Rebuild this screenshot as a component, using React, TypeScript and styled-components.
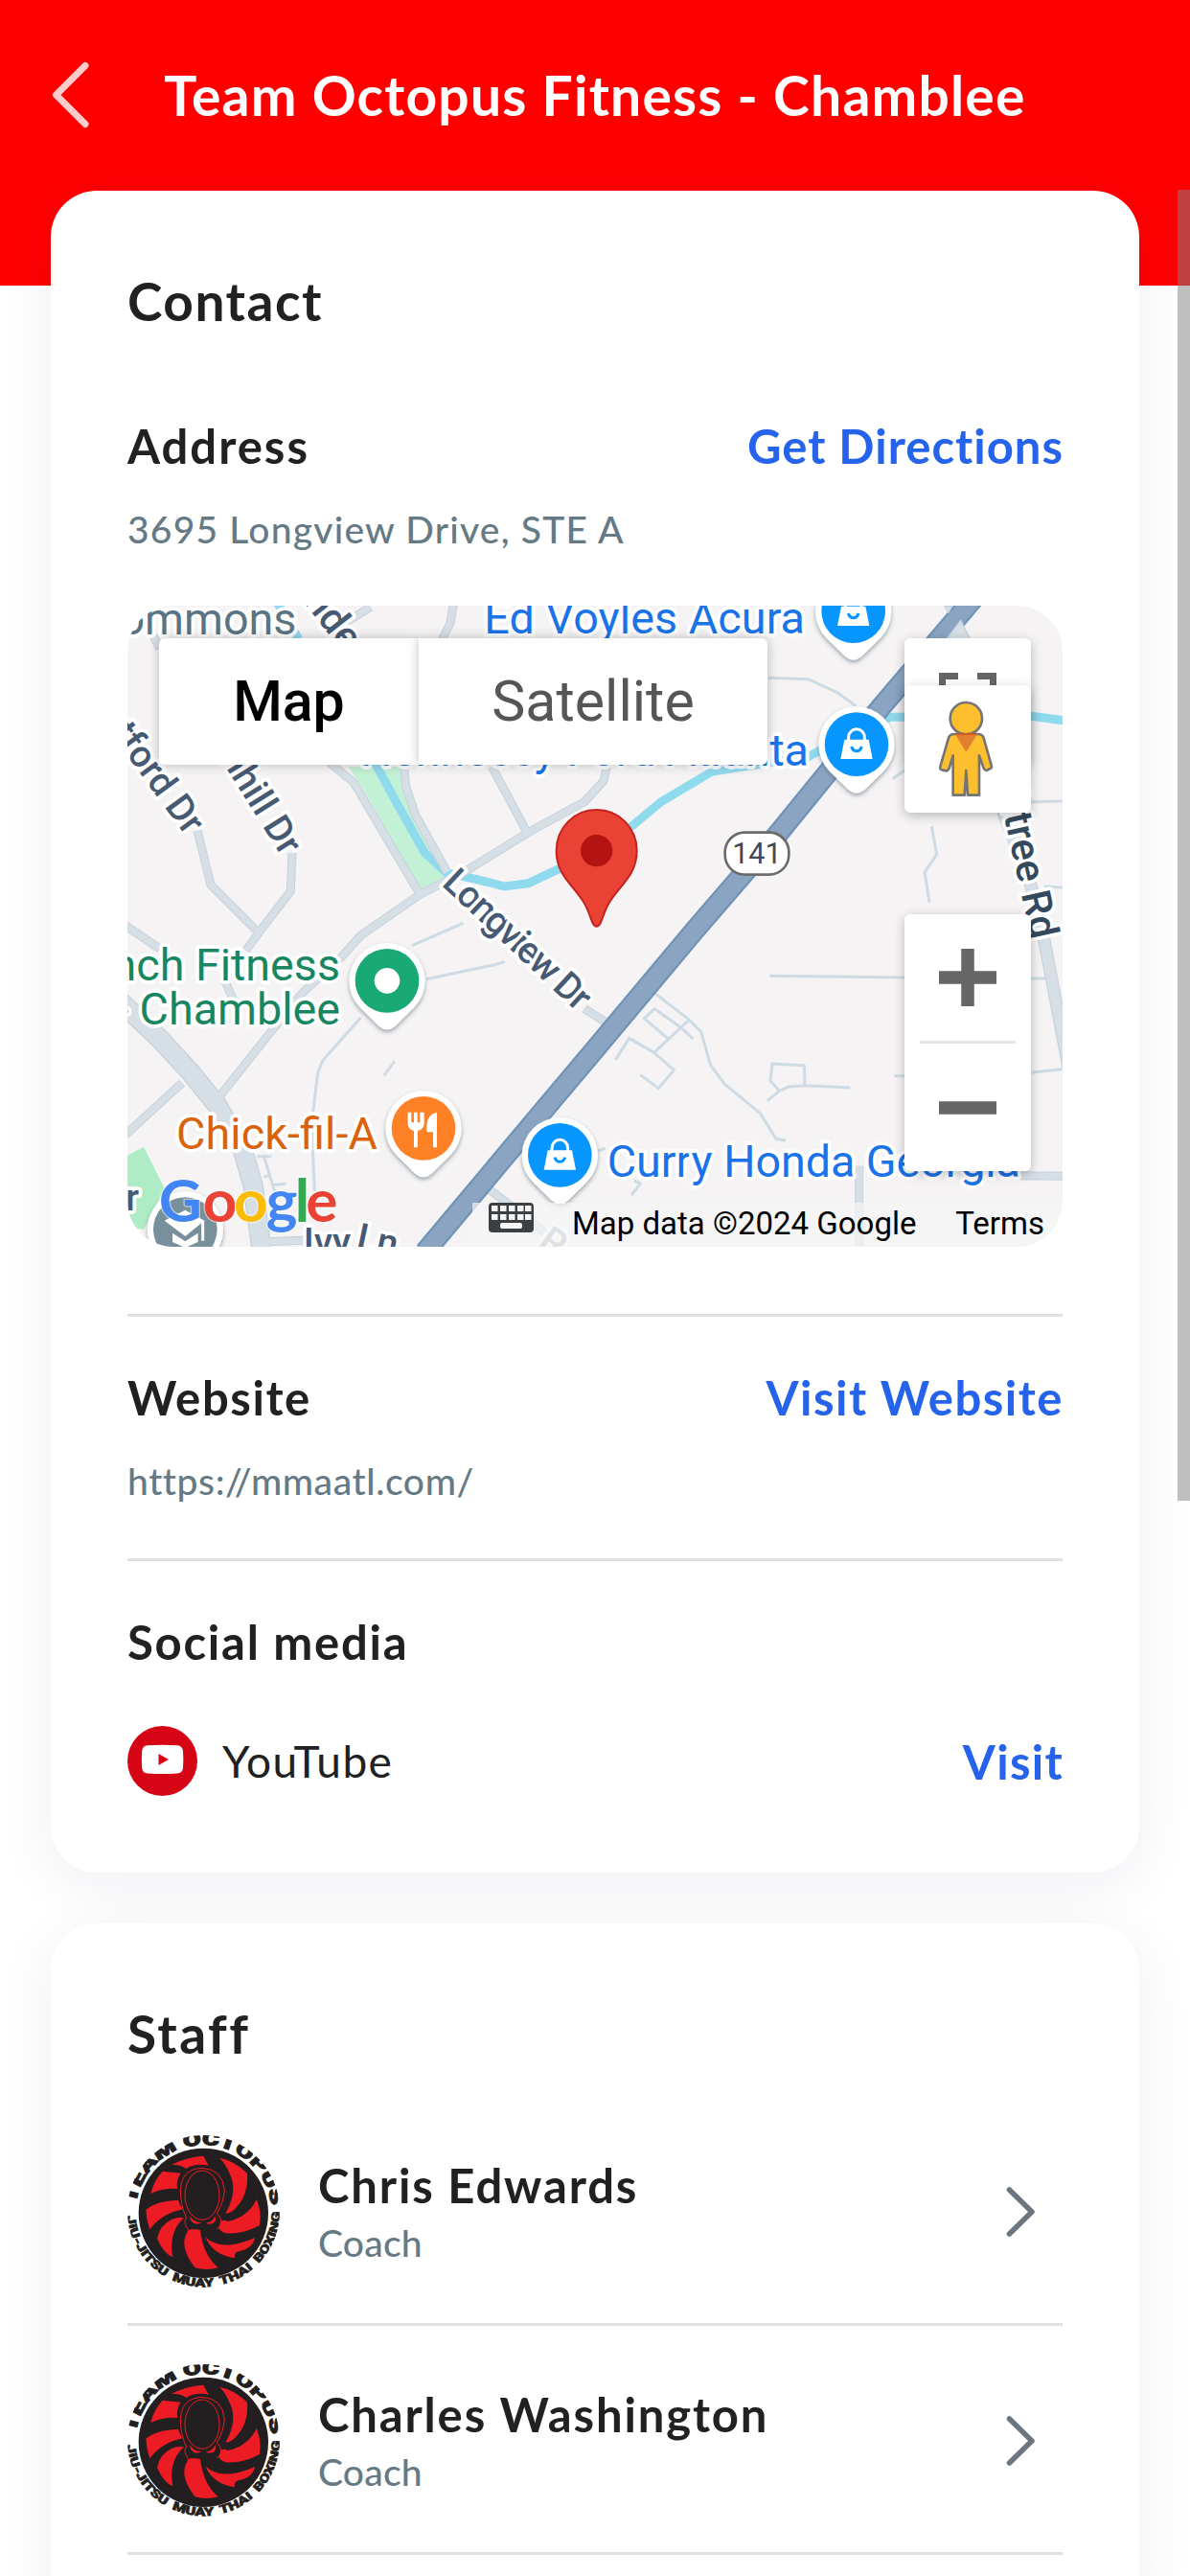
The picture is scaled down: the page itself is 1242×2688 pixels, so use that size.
import styled, { createGlobalStyle, css } from "styled-components";

interface TextProps {
  $spacing?: number;
}

interface Staff {
  id: number;
  name: string;
  role: string;
}

const staff: Staff[] = [
  { id: 1, name: "Chris Edwards", role: "Coach" },
  { id: 2, name: "Charles Washington", role: "Coach" },
];

const GlobalStyle = createGlobalStyle`
  * {
    box-sizing: border-box;
  }
  body {
    margin: 0;
    background: #ffffff;
    font-family: Lato, "Open Sans", sans-serif;
  }
`;

const spacing = css<TextProps>`
  letter-spacing: ${(props) => props.$spacing ?? 0}px;
  white-space: nowrap;
`;

const Page = styled.div`
  position: relative;
  width: 1242px;
  height: 2688px;
  overflow: hidden;
  background: #ffffff;
`;

const Header = styled.header`
  display: grid;
  grid-template-columns: 133px 1fr 133px;
  align-items: center;
  height: 298px;
  padding-bottom: 100px;
  margin-bottom: -99px;
  background: #ff0000;
`;

const BackButton = styled.button`
  display: flex;
  padding: 0 0 0 53px;
  border: none;
  background: none;
`;

const Title = styled.h1<TextProps>`
  margin: 0;
  color: #ffffff;
  font-size: 57px;
  font-weight: 700;
  line-height: 66px;
  text-align: center;
  ${spacing}
`;

const Card = styled.section`
  position: relative;
  margin: 0 53px 53px;
  padding: 82px 80px 80px;
  border-radius: 48px;
  background: #ffffff;
  box-shadow: 0 12px 60px rgba(30, 34, 80, 0.07);
`;

const CardTitle = styled.h2<TextProps>`
  margin: 0;
  color: #212121;
  font-size: 55px;
  font-weight: 700;
  line-height: 66px;
  ${spacing}
`;

const Row = styled.div<{ $top: number }>`
  display: flex;
  justify-content: space-between;
  align-items: center;
  margin-top: ${(props) => props.$top}px;
`;

const Label = styled.h3<TextProps>`
  margin: 0;
  color: #212121;
  font-size: 49px;
  font-weight: 700;
  line-height: 60px;
  ${spacing}
`;

const Link = styled.a<TextProps>`
  margin-right: -1px;
  color: #2563eb;
  font-size: 49px;
  font-weight: 700;
  line-height: 60px;
  ${spacing}
`;

const Detail = styled.p<TextProps & { $top: number }>`
  margin: ${(props) => props.$top}px 0 0;
  color: #667a85;
  font-size: 39px;
  font-weight: 500;
  line-height: 48px;
  ${spacing}
`;

const Divider = styled.hr<{ $top?: number }>`
  height: 3px;
  margin: ${(props) => props.$top ?? 0}px 0 0;
  border: none;
  background: #e0e0e0;
`;

const MapBox = styled.div`
  position: relative;
  height: 669px;
  margin: 56px 0 70px;
  border-radius: 48px;
  overflow: hidden;
  background: #f5f3f3;
  font-family: Roboto, sans-serif;
`;

const MapSvg = styled.svg`
  display: block;
  width: 976px;
  height: 669px;
`;

const MapTypes = styled.div`
  position: absolute;
  top: 34px;
  left: 33px;
  display: flex;
  height: 132px;
`;

const MapType = styled.button<{ $active?: boolean }>`
  width: ${(props) => (props.$active ? 271 : 364)}px;
  padding: 0 0 2px;
  border: none;
  border-radius: ${(props) => (props.$active ? "6px 0 0 6px" : "0 6px 6px 0")};
  background: #ffffff;
  box-shadow: 0 0 12px rgba(0, 0, 0, 0.25);
  color: ${(props) => (props.$active ? "#000000" : "#565656")};
  font-family: inherit;
  font-size: 59px;
  font-weight: ${(props) => (props.$active ? 500 : 400)};
`;

const MapButton = styled.button<{ $top: number; $height: number }>`
  position: absolute;
  top: ${(props) => props.$top}px;
  right: 33px;
  display: flex;
  width: 132px;
  height: ${(props) => props.$height}px;
  padding: 0;
  border: none;
  border-radius: 6px;
  background: #ffffff;
  box-shadow: 0 3px 12px rgba(0, 0, 0, 0.25);
`;

const MapFooter = styled.div`
  position: absolute;
  right: 0;
  bottom: 0;
  display: flex;
  align-items: flex-start;
  width: 616px;
  height: 46px;
  padding: 0 19px 0 17px;
  background: rgba(245, 245, 245, 0.7);
  color: #000000;
  font-size: 33px;
  line-height: 44px;
  white-space: nowrap;
`;

const Copyright = styled.span`
  margin: 0 auto 0 40px;
`;

const SocialRow = styled(Row)`
  height: 73px;
`;

const SocialName = styled.span<TextProps>`
  flex: 1;
  margin-left: 26px;
  color: #212121;
  font-size: 46px;
  line-height: 60px;
  ${spacing}
`;

const StaffList = styled.div`
  margin-top: 33px;
`;

const StaffRow = styled.div`
  display: flex;
  align-items: center;
  gap: 40px;
  padding: 40px 28px 37px 0;
`;

const StaffText = styled.div`
  flex: 1;
  padding-bottom: 2px;
`;

const ScrollThumb = styled.div`
  position: absolute;
  top: 198px;
  right: 0;
  width: 13px;
  height: 1368px;
  background: rgba(127, 127, 127, 0.5);
`;

const localRoads = [
  "M228 740 L270 910 L420 1060 L520 930 L525 810",
  "M420 1060 L380 1115",
  "M640 525 L718 590 L925 940",
  "M875 530 L880 600 L910 690 L1010 870",
  "M1510 540 L1500 585 L1440 650 L1265 745 L1080 860 L925 940 L740 1068 L680 1135 L560 1245 L450 1380 L295 1575",
  "M1150 540 L1260 745",
  "M1030 30 L1020 90 L990 150",
  "M690 90 L770 40",
  "M90 130 L110 170",
  "M0 1035 L110 1110",
  "M180 1530 L0 1695",
  "M310 1200 L340 1270",
  "M430 2028 L570 2022",
  "M1140 1862 L1210 1915 L1330 2010",
  "M1440 1298 L1515 1345",
  "M2300 1790 V2050",
  "M2805 1820 L2945 1822",
];

const lanes = [
  "M2015 262 L2140 266 L2230 307 L2290 350",
  "M2527 727 L2543 815 L2505 870 L2520 965",
  "M2405 578 L2445 550",
  "M2835 650 L2940 648",
  "M2880 915 L2940 918",
  "M2830 1203 L2890 1203",
  "M900 1100 L1060 1030",
  "M945 1205 L1160 1160 L1190 1150",
  "M740 1325 L620 1460 L605 1500 L590 1620 L590 1760 L595 1870",
  "M812 1507 L845 1463",
  "M435 1755 L470 1870 M415 1760 H460 M460 1850 L505 1846 M435 1825 L455 1818",
  "M2020 1195 L2442 1200",
  "M1655 1245 L1765 1330 L1805 1370 L1835 1475 L1880 1535 L1990 1625 L2040 1705 L2070 1710",
  "M1765 1335 L1658 1435 M1700 1390 L1627 1328 L1660 1298 L1740 1355 L1780 1392",
  "M1537 1458 L1580 1390 L1658 1435 L1720 1490 L1672 1547 L1615 1505",
  "M2013 1586 L2050 1555 L2022 1523 L2028 1470 L2128 1475 L2130 1538 L2272 1545 M2050 1555 L2080 1542 L2130 1538",
  "M2410 1508 H2445 M2840 1498 L2940 1486",
  "M1595 1835 L1615 1845 L1587 1882 M1460 1750 L1505 1735",
];

interface PinProps {
  x: number;
  y: number;
  color: string;
  kind: "bag" | "dot" | "food" | "school";
}

const Pin = ({ x, y, color, kind }: PinProps) => (
  <g transform={`translate(${x} ${y})`}>
    <g filter="url(#pinShadow)">
      <path d="M-85 84 A119 119 0 1 1 85 84 L26 142 Q0 164 -26 142 Z" fill="#fff" />
    </g>
    <circle r="100" fill={color} />
    {kind === "bag" && (
      <>
        <path d="M-25 -8 V-22 A25 26 0 0 1 25 -22 V-8" fill="none" stroke="#fff" strokeWidth="9" />
        <path d="M-38 -15 H38 L50 46 H-50 Z" fill="#fff" />
        <path d="M-16 7 Q-12 21 0 21 Q12 21 16 7" fill="none" stroke={color} strokeWidth="9" />
      </>
    )}
    {kind === "dot" && <circle r="40" fill="#fff" />}
    {kind === "food" && (
      <>
        <path
          d="M-49 -50 H-38 V-18 H-30 V-50 H-19 V-18 H-11 V-50 H2 V-15 Q2 4 -18 8 V60 H-30 V8 Q-49 4 -49 -15 Z"
          fill="#fff"
        />
        <path d="M42 -50 V60 H30 V12 H10 V-8 Q12 -45 42 -50 Z" fill="#fff" />
      </>
    )}
    {kind === "school" && (
      <>
        <path d="M-65 -27 L0 -60 L60 -27 L0 22 Z" fill="#fff" />
        <path d="M-40 12 L0 38 L40 12 V40 L0 58 L-40 40 Z" fill="#fff" />
        <path d="M55 -27 V36" stroke="#fff" strokeWidth="9" />
      </>
    )}
  </g>
);

const MapDrawing = () => (
  <MapSvg viewBox="9 36 2928 2007">
    <defs>
      <filter id="pinShadow" x="-30%" y="-30%" width="160%" height="160%">
        <feDropShadow dx="0" dy="7" stdDeviation="6" floodColor="#4a6070" floodOpacity="0.55" />
      </filter>
    </defs>

    <path d="M700 540 H865 L880 610 L1005 885 L930 930 L745 605 Z" fill="#c3f1d5" />
    <path d="M0 1762 L60 1730 L125 1860 L60 1990 L0 1975 Z" fill="#aeecc6" />
    <path
      d="M480 30 L545 140 M780 520 L850 650 L940 810 L1010 873 L1100 892 L1190 915 L1265 905 L1360 860 L1590 725 L1680 650 L1840 555 L2140 510 L2300 420 L2400 385 L2840 382 L2945 396"
      fill="none"
      stroke="#90daee"
      strokeWidth="27"
    />

    <g fill="none" strokeLinejoin="round">
      {lanes.map((d) => (
        <path key={d} d={d} stroke="#cfdbe4" strokeWidth="9" />
      ))}
      <g stroke="#c6d1da">
        {localRoads.map((d) => (
          <path key={d} d={d} strokeWidth="27" />
        ))}
        <path d="M-60 1230 L110 1392 L205 1495 L290 1600 L370 1740 L402 1850 L430 2060" strokeWidth="64" />
        <path d="M2750 680 L2835 900 L2880 1085 L2955 1480" strokeWidth="40" />
      </g>
      <g stroke="#d7dfe6">
        {localRoads.map((d) => (
          <path key={d} d={d} strokeWidth="21" />
        ))}
        <path d="M-60 1230 L110 1392 L205 1495 L290 1600 L370 1740 L402 1850 L430 2060" strokeWidth="56" />
        <path d="M2750 680 L2835 900 L2880 1085 L2955 1480" strokeWidth="33" />
      </g>
      <path d="M2690 -24 L2370 352 L2050 745 L1787 1050 L1477 1420 L1300 1630 L940 2060" stroke="#6f92b7" strokeWidth="67" />
      <path d="M2690 -24 L2370 352 L2050 745 L1787 1050 L1477 1420 L1300 1630 L940 2060" stroke="#8ba4c1" strokeWidth="54" />
      <path d="M2570 145 L2618 82 L2650 145 Z M2568 38 H2590 L2580 58 Z" fill="#d7dfe6" stroke="#c6d1da" strokeWidth="4" />
    </g>

    <g fontFamily="Roboto, sans-serif" stroke="#fff" strokeWidth="22" strokeLinejoin="round" paintOrder="stroke">
      <g fontSize="117" fontWeight="500" fill="#475a73">
        <text textAnchor="end" transform="translate(192 759) rotate(54)">Hartford Dr</text>
        <text textAnchor="end" transform="translate(493 824) rotate(58)">Thornhill Dr</text>
        <text transform="translate(990 910) rotate(43)" textLength="585">Longview Dr</text>
        <text transform="translate(558 22) rotate(52)" fontSize="125">nder</text>
        <text x="560" y="2067">Ivy</text>
        <text transform="translate(722 2048) rotate(12)">Ln</text>
        <text x="45" y="1930" textAnchor="end">Dr</text>
        <text transform="translate(1290 2040) rotate(35)" fill="#a9b4bf">R</text>
        <text textAnchor="end" transform="translate(2840 1084) rotate(77.5)" fontSize="126" fill="#34495c">
          Peachtree Rd
        </text>
      </g>
      <g fontSize="140" fill="#1a73e8">
        <text x="1126" y="122" textLength="1004">Ed Voyles Acura</text>
        <text x="738" y="537" textLength="1404">Hennessy Ford Atlanta</text>
        <text x="1511" y="1825" textLength="1294">Curry Honda Georgia</text>
        <text x="538" y="125" textAnchor="end" fill="#5a7483">Commons</text>
        <text x="675" y="1208" textAnchor="end" fill="#188660">Crunch Fitness</text>
        <text x="675" y="1348" textAnchor="end" fill="#188660">- Chamblee</text>
        <text x="162" y="1738" textLength="630" fill="#d9620a">Chick-fil-A</text>
      </g>
    </g>

    <rect x="1880" y="746" width="200" height="132" rx="62" fill="#fff" stroke="#6b6b6b" strokeWidth="8" />
    <text x="1980" y="844" textAnchor="middle" fontFamily="Roboto, sans-serif" fontSize="92" fill="#3f4a55">141</text>

    <Pin x={2282} y={53} color="#0795ff" kind="bag" />
    <Pin x={2292} y={470} color="#0795ff" kind="bag" />
    <Pin x={1363} y={1756} color="#0795ff" kind="bag" />
    <Pin x={822} y={1210} color="#19a974" kind="dot" />
    <Pin x={936} y={1672} color="#ff8126" kind="food" />
    <Pin x={190} y={1988} color="#78909c" kind="school" />

    <path
      d="M1478 675 C1408 675 1352 731 1352 803 C1352 880 1405 910 1440 968 C1460 1002 1462 1040 1478 1040 C1494 1040 1496 1002 1516 968 C1551 910 1604 880 1604 803 C1604 731 1548 675 1478 675 Z"
      fill="#ea4335"
      stroke="#c5221f"
      strokeWidth="6"
    />
    <circle cx="1478" cy="803" r="50" fill="#b31412" />

    <text
      y="1966"
      fontFamily="Lato, sans-serif"
      fontSize="186"
      fontWeight="700"
      stroke="#fff"
      strokeOpacity="0.5"
      strokeWidth="8"
      paintOrder="stroke"
    >
      <tspan x="107" fill="#4285f4">G</tspan>
      <tspan x="245" fill="#ea4335">o</tspan>
      <tspan x="342" fill="#fbbc05">o</tspan>
      <tspan x="443" fill="#4285f4">g</tspan>
      <tspan x="533" fill="#34a853">l</tspan>
      <tspan x="568" fill="#ea4335">e</tspan>
    </text>
  </MapSvg>
);

const KeyboardIcon = () => (
  <svg width="47" height="31" viewBox="0 0 47 31">
    <rect width="47" height="31" rx="4" fill="#3c4043" />
    <g fill="#f5f5f5">
      {[3, 12, 21, 30, 38].map((x) => (
        <g key={x}>
          <rect x={x} y="3" width="6.5" height="6" />
          <rect x={x} y="12" width="6.5" height="6" />
        </g>
      ))}
      <rect x="12" y="21" width="23" height="6" rx="2" />
    </g>
  </svg>
);

const FullscreenIcon = () => (
  <svg width="132" height="132" viewBox="0 0 132 132">
    <path d="M39.5 60 V39.5 H56 M76 39.5 H92.5 V60" fill="none" stroke="#666666" strokeWidth="7" />
  </svg>
);

const Pegman = () => (
  <svg width="132" height="133" viewBox="1002 285 396 399">
    <g fill="#fdbf2d" stroke="#757575" strokeWidth="8" strokeLinejoin="round">
      <path d="M1158 438 Q1144 438 1140 450 L1114 540 Q1112 549 1122 551 L1133 553 Q1138 553 1142 545 L1154 505 V629 H1190 L1195 552 L1200 629 H1236 V505 L1250 545 Q1253 553 1260 551 L1269 547 Q1277 544 1274 536 L1250 450 Q1246 438 1232 438 Z" />
      <circle cx="1195" cy="389" r="50" />
    </g>
    <path d="M1160 437 H1231 L1195 494 Z" fill="#e08030" />
    <path d="M1162 438 H1229" stroke="#d15a20" strokeWidth="6" />
  </svg>
);

const ZoomIcons = () => (
  <svg width="132" height="268" viewBox="0 0 132 268">
    <path d="M36 66 H96 M66 36 V96 M36 202 H96" stroke="#666666" strokeWidth="13.5" />
    <path d="M16 133.5 H116" stroke="#e6e6e6" strokeWidth="3" />
  </svg>
);

const YouTubeIcon = () => (
  <svg width="73" height="73" viewBox="0 0 73 73">
    <circle cx="36.5" cy="36.5" r="36.5" fill="#d60515" />
    <path
      d="M21 20.3 Q37 19 52 20.3 Q57.5 21 58 26 Q58.7 35 58 44 Q57.5 49 52 49.5 Q37 50.5 21 49.5 Q15.7 49 15.2 44 Q14.5 35 15.2 26 Q15.7 21 21 20.3 Z"
      fill="#fff"
    />
    <path d="M32.5 29 L43 35 L32.5 41 Z" fill="#d60515" />
  </svg>
);

const TeamLogo = ({ id }: { id: number }) => (
  <svg width="159" height="159" viewBox="38 55 477 477">
    <defs>
      <clipPath id={`crop${id}`}>
        <circle cx="276.5" cy="293.5" r="238.5" />
      </clipPath>
      <path id={`top${id}`} d="M65 270 A213 213 0 0 1 489 292" />
      <path id={`bottom${id}`} d="M37 308 A240 240 0 0 0 516 302" />
    </defs>
    <g clipPath={`url(#crop${id})`}>
      <g fontFamily="Roboto, sans-serif" fontWeight="900" fill="#231f20" stroke="#231f20">
        <text fontSize="56" strokeWidth="3">
          <textPath href={`#top${id}`} textLength="618" lengthAdjust="spacingAndGlyphs">
            TEAM OCTOPUS
          </textPath>
        </text>
        <text fontSize="37" strokeWidth="2" wordSpacing="8">
          <textPath href={`#bottom${id}`} textLength="730" lengthAdjust="spacingAndGlyphs">
            JIU-JITSU MUAY THAI BOXING
          </textPath>
        </text>
      </g>
      <circle cx="276" cy="299" r="203" fill="#231f20" />
      <g fill="#ed1c24">
        <path d="M176 148 Q220 124 276 120 L292 150 Q250 142 222 160 Q205 146 176 148 Z" />
        <path d="M326 126 Q375 136 413 175 Q418 240 378 282 Q365 298 345 300 Q385 230 358 176 Q348 148 326 126 Z" />
        <path d="M148 168 L205 174 Q188 200 195 223 Q150 220 111 238 Q120 198 148 168 Z" />
        <path d="M96 288 Q130 260 197 258 Q202 275 212 287 Q148 298 108 350 Q97 320 96 288 Z" />
        <path d="M131 378 Q140 335 178 318 Q196 310 215 314 Q165 360 180 437 Q150 424 131 378 Z" />
        <path d="M228 355 Q195 400 250 470 Q285 480 322 470 Q275 430 266 352 L240 345 Z" />
        <path d="M282 374 Q330 422 438 376 Q428 412 388 418 Q370 422 374 440 Q305 430 282 374 Z" />
        <path d="M442 256 Q460 300 451 338 Q400 366 345 362 Q320 354 322 330 Q340 315 352 325 Q418 310 442 256 Z" />
      </g>
      <path d="M222 312 Q196 260 196 226 Q198 152 272 150 Q350 154 352 226 Q352 262 322 312 Q338 330 318 350 L235 350 Q215 330 222 312 Z" fill="#231f20" />
      <g fill="none" stroke="#ed1c24" strokeWidth="3">
        <path d="M222 312 Q204 275 204 226 Q208 160 272 158 Q336 162 342 226 Q340 265 318 300 Q345 325 318 350" />
        <ellipse cx="272" cy="243" rx="54" ry="77" />
        <path d="M224 310 Q210 330 228 350 Q230 372 222 385" />
      </g>
      <path d="M234 308 Q245 328 268 328 Q262 336 245 330 Q234 324 234 308 Z M284 330 Q305 328 312 308 Q318 325 306 331 Q292 336 284 330 Z" fill="#ed1c24" />
    </g>
  </svg>
);

const App = () => {
  return (
    <Page>
      <GlobalStyle />
      <Header>
        <BackButton>
          <svg width="41" height="70" viewBox="0 0 41 70">
            <path
              d="M36 4.5 L5.5 35 L36 65.5"
              fill="none"
              stroke="#ffcccc"
              strokeWidth="7"
              strokeLinecap="round"
              strokeLinejoin="round"
            />
          </svg>
        </BackButton>
        <Title $spacing={1.2}>Team Octopus Fitness - Chamblee</Title>
      </Header>

      <Card>
        <CardTitle $spacing={1.5}>Contact</CardTitle>
        <Row $top={88}>
          <Label $spacing={2}>Address</Label>
          <Link $spacing={1}>Get Directions</Link>
        </Row>
        <Detail $top={33} $spacing={1.2}>3695 Longview Drive, STE A</Detail>

        <MapBox>
          <MapDrawing />
          <MapFooter>
            <KeyboardIcon />
            <Copyright>Map data ©2024 Google</Copyright>
            <span>Terms</span>
          </MapFooter>
          <MapTypes>
            <MapType $active>Map</MapType>
            <MapType>Satellite</MapType>
          </MapTypes>
          <MapButton $top={34} $height={132}>
            <FullscreenIcon />
          </MapButton>
          <MapButton $top={83} $height={133}>
            <Pegman />
          </MapButton>
          <MapButton $top={322} $height={268}>
            <ZoomIcons />
          </MapButton>
        </MapBox>

        <Divider />
        <Row $top={54}>
          <Label $spacing={1.6}>Website</Label>
          <Link $spacing={1.5}>Visit Website</Link>
        </Row>
        <Detail $top={33} $spacing={0.6}>https://mmaatl.com/</Detail>
        <Divider $top={57} />
        <Row $top={54}>
          <Label $spacing={1.75}>Social media</Label>
        </Row>
        <SocialRow $top={58}>
          <YouTubeIcon />
          <SocialName $spacing={1.4}>YouTube</SocialName>
          <Link $spacing={1.3}>Visit</Link>
        </SocialRow>
      </Card>

      <Card>
        <CardTitle $spacing={2.4}>Staff</CardTitle>
        <StaffList>
          {staff.map((person) => (
            <div key={person.id}>
              <StaffRow>
                <TeamLogo id={person.id} />
                <StaffText>
                  <Label $spacing={1.85}>{person.name}</Label>
                  <Detail $top={6} $spacing={0.2}>{person.role}</Detail>
                </StaffText>
                <svg width="31" height="54" viewBox="0 0 31 54">
                  <path
                    d="M3.5 4 L27 27 L3.5 50"
                    fill="none"
                    stroke="#6b7680"
                    strokeWidth="5.5"
                    strokeLinecap="round"
                    strokeLinejoin="round"
                  />
                </svg>
              </StaffRow>
              <Divider />
            </div>
          ))}
        </StaffList>
      </Card>
      <ScrollThumb />
    </Page>
  );
};

export default App;
